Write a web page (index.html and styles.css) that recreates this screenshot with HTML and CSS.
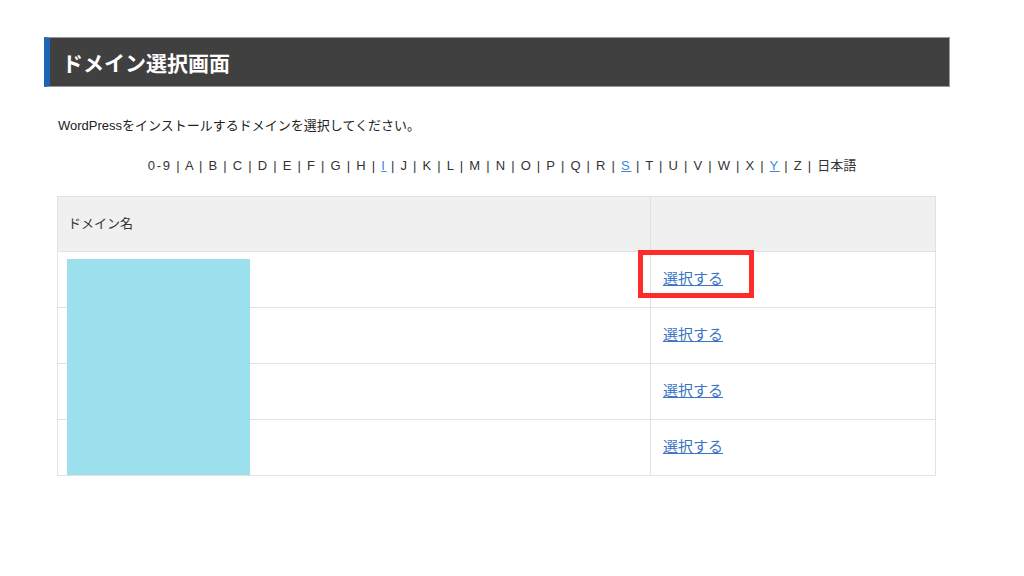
FILE: index.html
```html
<!DOCTYPE html>
<html lang="ja">
<head>
    <meta charset="UTF-8">
    <meta name="viewport" content="width=device-width, initial-scale=1.0">
    <title>ドメイン選択画面</title>
    <link rel="stylesheet" href="styles.css">
</head>
<body>

    <div class="page">
        <!-- Title bar -->
        <h1 class="page-title">ドメイン選択画面</h1>

        <p class="lead">WordPressをインストールするドメインを選択してください。</p>

        <!-- Index -->
        <p class="index">
            0-9 | A | B | C | D | E | F | G | H | <a href="#">I</a> | J | K | L | M | N | O | P | Q | R | <a href="#">S</a> | T | U | V | W | X | <a href="#">Y</a> | Z | <span class="jp">日本語</span>
        </p>

        <!-- Domain list -->
        <div class="domain-table">
            <div class="mask"></div>
            <table>
                <thead>
                    <tr>
                        <th class="col-name">ドメイン名</th>
                        <th class="col-action"></th>
                    </tr>
                </thead>
                <tbody>
                    <tr>
                        <td></td>
                        <td><span class="highlight"></span><a href="#">選択する</a></td>
                    </tr>
                    <tr>
                        <td></td>
                        <td><a href="#">選択する</a></td>
                    </tr>
                    <tr>
                        <td></td>
                        <td><a href="#">選択する</a></td>
                    </tr>
                    <tr>
                        <td></td>
                        <td><a href="#">選択する</a></td>
                    </tr>
                </tbody>
            </table>
        </div>
    </div>

</body>
</html>
```

FILE: styles.css
```css
body {
    margin: 0;
    padding: 0;
    background-color: #fff;
    font-family: "Noto Sans CJK JP", "Liberation Sans", sans-serif;
    color: #333;
}

.page {
    width: 906px;
    margin-left: 44px;
    padding-top: 37px;
}

/* Title bar */
.page-title {
    margin: 0;
    height: 50px;
    box-sizing: border-box;
    background-color: #404040;
    border-left: 6px solid #1e64b4;
    border-top: 1px solid #9a9a9a;
    border-right: 1px solid #9a9a9a;
    border-bottom: 1px solid #9a9a9a;
    color: #fff;
    font-size: 21px;
    font-weight: bold;
    line-height: 48px;
    padding-left: 12px;
}

.lead {
    margin: 27px 0 0 14px;
    font-family: "Liberation Sans", "Noto Sans CJK JP", sans-serif;
    font-size: 13px;
    line-height: 24px;
    color: #222;
}

/* Alphabet index */
.index {
    margin: 16px 0 0 0;
    text-align: center;
    font-family: "Liberation Sans", "Noto Sans CJK JP", sans-serif;
    font-size: 13px;
    line-height: 24px;
    color: #333;
    letter-spacing: 1.75px;
    word-spacing: -1px;
    width: 916px;
}

.index a {
    color: #3a8ad6;
}

.index .jp {
    letter-spacing: 0;
}

/* Table */
.domain-table {
    position: relative;
    margin: 18px 0 0 13px;
    width: 879px;
}

.domain-table table {
    width: 100%;
    border-collapse: collapse;
}

.domain-table th,
.domain-table td {
    border: 1px solid #e2e2e2;
    text-align: left;
    font-weight: normal;
    font-size: 13px;
    color: #333;
}

.domain-table th {
    background-color: #f0f0f0;
    height: 50px;
    padding: 0 0 4px 10px;
}

.domain-table td {
    height: 51px;
    padding: 0 0 4px 12px;
}

.col-name {
    width: 582px;
}

.domain-table td a {
    color: #3b74c4;
    font-size: 15px;
    position: relative;
}

.domain-table tbody td:last-child {
    position: relative;
}

/* Masked domain names */
.mask {
    position: absolute;
    left: 10px;
    top: 63px;
    width: 183px;
    height: 216px;
    background-color: #9be0ec;
}

/* Red emphasis box */
.highlight {
    position: absolute;
    left: -13px;
    top: -2px;
    width: 106px;
    height: 38px;
    border: 5px solid #ff2b2b;
}
```
